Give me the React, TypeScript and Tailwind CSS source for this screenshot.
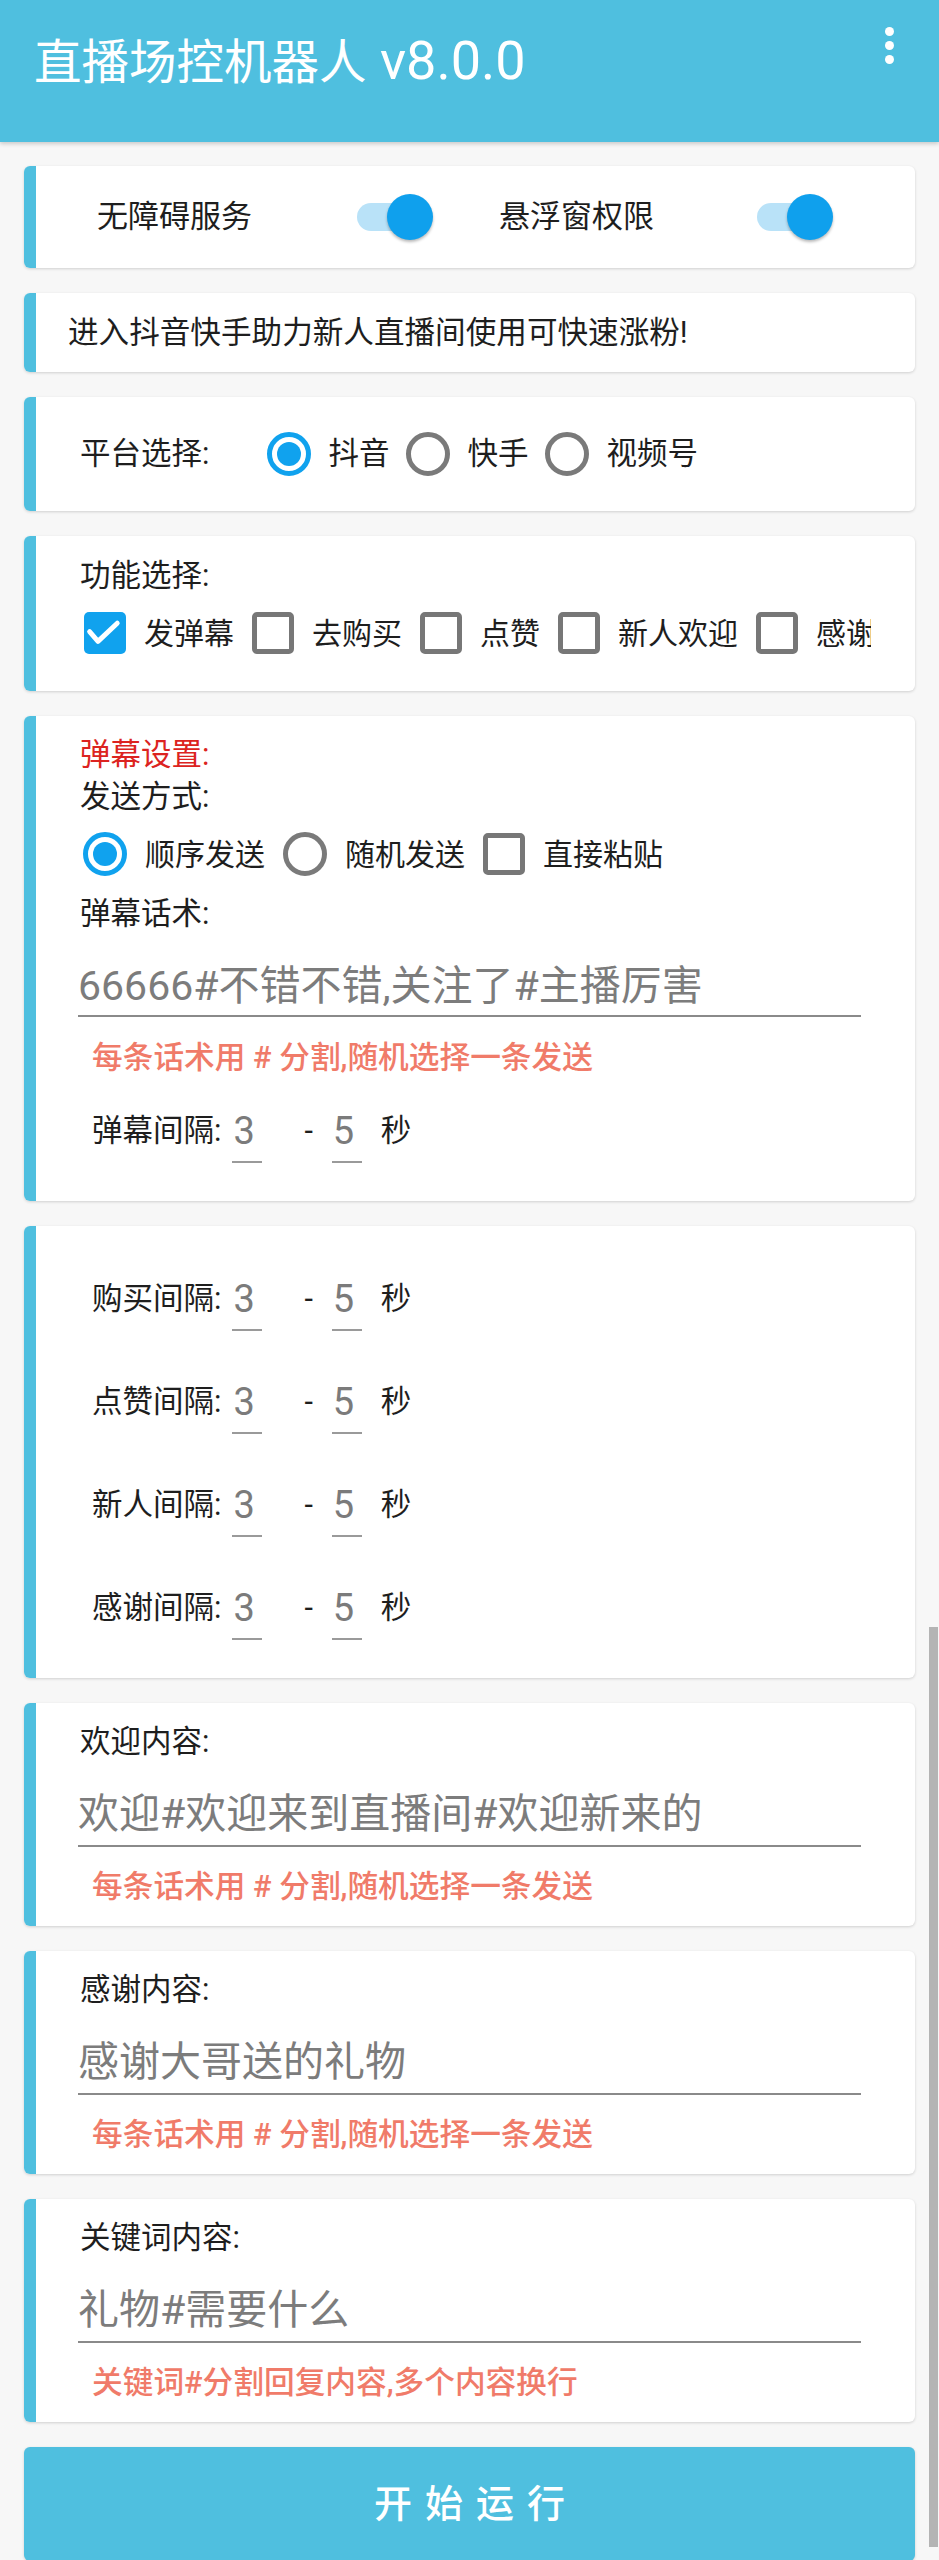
import React from "react";

type WithClass = { className?: string };

function Card({ children, className = "" }: { children: React.ReactNode } & WithClass) {
  return (
    <div className="flex overflow-hidden rounded-[6px] bg-white shadow-[0_1px_3px_rgba(0,0,0,0.16)]">
      <div className="w-[12px] shrink-0 bg-[#4fbfdf]" />
      <div className={"min-w-0 flex-1 " + className}>{children}</div>
    </div>
  );
}

function Switch({ className = "" }: WithClass) {
  return (
    <div className={"relative h-[46px] w-[76px] shrink-0 " + className}>
      <div className="absolute left-0 top-[9px] h-[28px] w-[64px] rounded-full bg-[#b9e2f8]" />
      <div className="absolute right-0 top-0 h-[46px] w-[46px] rounded-full bg-[#0fa0ed] shadow-[0_2px_3px_rgba(0,0,0,0.28)]" />
    </div>
  );
}

function Radio({ checked = false }: { checked?: boolean }) {
  if (checked) {
    return (
      <div className="flex h-[44px] w-[44px] shrink-0 items-center justify-center rounded-full border-[5px] border-[#10a2ee]">
        <div className="h-[24px] w-[24px] rounded-full bg-[#10a2ee]" />
      </div>
    );
  }
  return <div className="h-[44px] w-[44px] shrink-0 rounded-full border-[5px] border-[#7a7a7a]" />;
}

function Checkbox({ checked = false }: { checked?: boolean }) {
  if (checked) {
    return (
      <div className="flex h-[42px] w-[42px] shrink-0 items-center justify-center rounded-[5px] bg-[#10a2ee]">
        <svg viewBox="0 0 24 24" className="h-[42px] w-[42px]" fill="none">
          <polyline
            points="3.2,11.2 8,16.8 19,6.4"
            stroke="white"
            strokeWidth="2.8"
            strokeLinecap="round"
            strokeLinejoin="round"
          />
        </svg>
      </div>
    );
  }
  return <div className="h-[42px] w-[42px] shrink-0 rounded-[5px] border-[5px] border-[#777777]" />;
}

function Field({ value, className = "" }: { value: string } & WithClass) {
  return (
    <div className={"flex w-[30px] shrink-0 flex-col pt-[10px] " + className}>
      <span className="pl-[1px] text-[38px] leading-[44px] text-[#7b7b7b]">{value}</span>
      <div className="mt-[8px] h-[2px] bg-[#9a9a9a]" />
    </div>
  );
}

function IntervalRow({ label }: { label: string }) {
  return (
    <div className="flex h-[64px] items-center pl-[14px] text-[30.5px] text-[#1e1e1e]">
      <span>{label}</span>
      <Field value="3" className="ml-[11px]" />
      <span className="ml-[42px]">-</span>
      <Field value="5" className="ml-[19px]" />
      <span className="ml-[19px]">秒</span>
    </div>
  );
}

function Label({ children, className = "" }: { children: React.ReactNode } & WithClass) {
  return <div className={"pl-[2px] text-[30.5px] leading-[42px] text-[#1e1e1e] " + className}>{children}</div>;
}

function Input({ text, className = "pt-[23px] pb-[3px]" }: { text: string } & WithClass) {
  return (
    <div className={"border-b-2 border-[#8a8a8a] text-[41px] leading-[56px] whitespace-nowrap text-[#7c7c7c] " + className}>
      {text}
    </div>
  );
}

function Hint({ children, className = "mt-[20px]" }: { children: React.ReactNode } & WithClass) {
  return (
    <div className={"ml-[14px] text-[30.7px] font-medium leading-[40px] text-[#f07b69] " + className}>{children}</div>
  );
}

function ContentCard({ label, text, hint }: { label: string; text: string; hint: string }) {
  return (
    <Card className="h-[223px] pl-[42px] pr-[54px] pt-[18px]">
      <Label>{label}</Label>
      <Input text={text} />
      <Hint>{hint}</Hint>
    </Card>
  );
}

const features = [
  { name: "发弹幕", checked: true },
  { name: "去购买", checked: false },
  { name: "点赞", checked: false },
  { name: "新人欢迎", checked: false },
  { name: "感谢", checked: false },
];

export default function App() {
  return (
    <div className="relative h-[2560px] overflow-hidden bg-[#f7f7f7] font-['Roboto','Noto_Sans_CJK_SC',sans-serif]">
      <header className="relative z-10 flex h-[142px] items-start justify-between bg-[#4fbfdf] shadow-[0_2px_4px_rgba(0,0,0,0.18)]">
        <h1 className="pl-[34px] pt-[34px] text-[47.5px] font-normal leading-[54px] text-white">
          直播场控机器人<span className="text-[54px]"> v8.0.0</span>
        </h1>
        <div className="mr-[45px] mt-[27px] flex flex-col gap-[5px]">
          <div className="h-[9px] w-[9px] rounded-full bg-white" />
          <div className="h-[9px] w-[9px] rounded-full bg-white" />
          <div className="h-[9px] w-[9px] rounded-full bg-white" />
        </div>
      </header>

      <main className="flex flex-col gap-[25px] px-[24px] pt-[24px]">
        <Card className="flex h-[102px] items-center text-[31px] text-[#1e1e1e]">
          <span className="ml-[61px]">无障碍服务</span>
          <Switch className="ml-[105px]" />
          <span className="ml-[66px]">悬浮窗权限</span>
          <Switch className="ml-[103px]" />
        </Card>

        <Card className="flex h-[79px] items-center pl-[32px] text-[30.6px] text-[#1e1e1e]">
          进入抖音快手助力新人直播间使用可快速涨粉!
        </Card>

        <Card className="flex h-[114px] items-center pl-[44px] text-[30.5px] text-[#1e1e1e]">
          <span>平台选择:</span>
          <div className="ml-[58px] flex items-center gap-[17px]">
            <Radio checked />
            <span>抖音</span>
            <Radio />
            <span>快手</span>
            <Radio />
            <span>视频号</span>
          </div>
        </Card>

        <Card className="h-[155px] pl-[42px] pt-[19px]">
          <Label>功能选择:</Label>
          <div className="ml-[6px] flex h-[72px] w-[787px] items-center gap-[18px] overflow-hidden whitespace-nowrap text-[30px] text-[#1e1e1e]">
            {features.map((f) => (
              <React.Fragment key={f.name}>
                <Checkbox checked={f.checked} />
                <span className="shrink-0">{f.name}</span>
              </React.Fragment>
            ))}
          </div>
        </Card>

        <Card className="h-[485px] pl-[42px] pr-[54px] pt-[18px]">
          <Label className="text-[#dc2320]">弹幕设置:</Label>
          <Label>发送方式:</Label>
          <div className="ml-[5px] flex h-[72px] items-center gap-[18px] text-[30px] text-[#1e1e1e]">
            <Radio checked />
            <span>顺序发送</span>
            <Radio />
            <span>随机发送</span>
            <Checkbox />
            <span>直接粘贴</span>
          </div>
          <Label className="leading-[48px]">弹幕话术:</Label>
          <Input text="66666#不错不错,关注了#主播厉害" className="pt-[20px] pb-[1px]" />
          <Hint className="mt-[21px]">每条话术用 # 分割,随机选择一条发送</Hint>
          <div className="mt-[21px]">
            <IntervalRow label="弹幕间隔:" />
          </div>
        </Card>

        <Card className="flex h-[452px] flex-col gap-[39px] pl-[42px] pt-[41px]">
          <IntervalRow label="购买间隔:" />
          <IntervalRow label="点赞间隔:" />
          <IntervalRow label="新人间隔:" />
          <IntervalRow label="感谢间隔:" />
        </Card>

        <ContentCard label="欢迎内容:" text="欢迎#欢迎来到直播间#欢迎新来的" hint="每条话术用 # 分割,随机选择一条发送" />
        <ContentCard label="感谢内容:" text="感谢大哥送的礼物" hint="每条话术用 # 分割,随机选择一条发送" />
        <ContentCard label="关键词内容:" text="礼物#需要什么" hint="关键词#分割回复内容,多个内容换行" />

        <button
          type="button"
          className="flex h-[114px] w-full shrink-0 items-center justify-center rounded-[6px] bg-[#4fbfdf] pl-[13px] text-[38px] font-medium tracking-[13px] text-white shadow-[0_1px_3px_rgba(0,0,0,0.16)]"
        >
          开始运行
        </button>
      </main>

      <div className="absolute left-[929px] top-[1627px] h-[920px] w-[9px] bg-[#b4b4b4]" />
    </div>
  );
}
